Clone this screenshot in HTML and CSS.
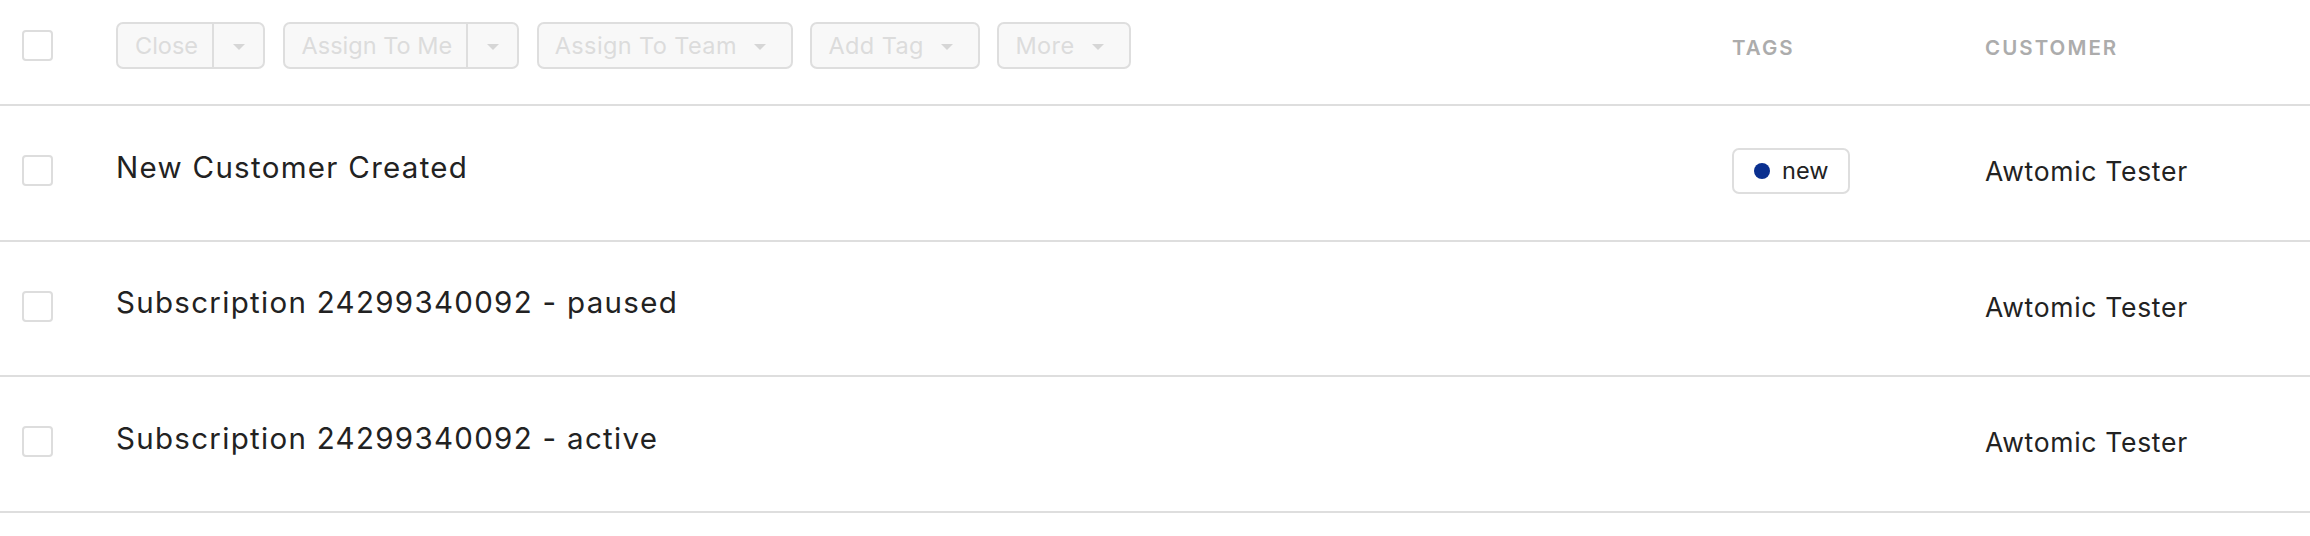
FILE: index.html
```html
<!DOCTYPE html>
<html lang="en">
<head>
    <meta charset="UTF-8">
    <meta name="viewport" content="width=device-width, initial-scale=1.0">
    <title>Conversations</title>
    <link rel="stylesheet" href="styles.css">
</head>
<body>

    <div class="list">

        <div class="list-row list-header">
            <div class="cell cell-check"><span class="checkbox"></span></div>
            <div class="cell cell-main">
                <div class="toolbar">
                    <div class="btn btn-split">
                        <span class="btn-label">Close</span>
                        <span class="btn-toggle"><span class="caret"></span></span>
                    </div>
                    <div class="btn btn-split">
                        <span class="btn-label">Assign To Me</span>
                        <span class="btn-toggle"><span class="caret"></span></span>
                    </div>
                    <div class="btn btn-menu">
                        <span class="btn-label">Assign To Team</span>
                        <span class="caret"></span>
                    </div>
                    <div class="btn btn-menu">
                        <span class="btn-label">Add Tag</span>
                        <span class="caret"></span>
                    </div>
                    <div class="btn btn-menu">
                        <span class="btn-label">More</span>
                        <span class="caret"></span>
                    </div>
                </div>
            </div>
            <div class="cell cell-tags col-title">Tags</div>
            <div class="cell cell-customer col-title">Customer</div>
        </div>

        <div class="list-row">
            <div class="cell cell-check"><span class="checkbox"></span></div>
            <div class="cell cell-main subject">New Customer Created</div>
            <div class="cell cell-tags">
                <span class="tag"><span class="tag-dot"></span>new</span>
            </div>
            <div class="cell cell-customer customer">Awtomic Tester</div>
        </div>

        <div class="list-row">
            <div class="cell cell-check"><span class="checkbox"></span></div>
            <div class="cell cell-main subject">Subscription 24299340092 - paused</div>
            <div class="cell cell-tags"></div>
            <div class="cell cell-customer customer">Awtomic Tester</div>
        </div>

        <div class="list-row">
            <div class="cell cell-check"><span class="checkbox"></span></div>
            <div class="cell cell-main subject">Subscription 24299340092 - active</div>
            <div class="cell cell-tags"></div>
            <div class="cell cell-customer customer">Awtomic Tester</div>
        </div>

    </div>

</body>
</html>
```

FILE: styles.css
```css
body {
    margin: 0;
    background-color: #ffffff;
    font-family: 'Inter', 'Noto Sans', sans-serif;
    color: #222222;
}

.list {
    width: 100%;
}

.list-row {
    display: grid;
    grid-template-columns: 116px 1fr 253px 325px;
    align-items: center;
    height: 135.5px;
    box-sizing: border-box;
    border-bottom: 2px solid #dedede;
}

.list-header {
    height: 106px;
}

.cell {
    display: flex;
    align-items: center;
}

.cell-check {
    padding-left: 22px;
}

.checkbox {
    display: block;
    width: 31px;
    height: 31px;
    box-sizing: border-box;
    border: 2px solid #dddddd;
    border-radius: 4px;
    background-color: #ffffff;
}

.list-row .cell-check {
    margin-top: -4px;
}

.list-header .cell-check {
    margin-top: -13px;
}

/* toolbar */

.toolbar {
    display: flex;
    gap: 17.5px;
    margin-top: -13px;
}

.btn {
    display: flex;
    align-items: center;
    height: 47px;
    box-sizing: border-box;
    border: 2px solid #dedede;
    border-radius: 7px;
    background-color: #f8f8f8;
    color: #dcdcdc;
    font-size: 23.5px;
    white-space: nowrap;
}

.btn-split .btn-label {
    padding: 0 14px 0 17px;
}

.btn-toggle {
    display: flex;
    align-items: center;
    justify-content: center;
    width: 49px;
    height: 100%;
    border-left: 2px solid #dedede;
}

.btn-menu {
    padding: 0 25px 0 16px;
    gap: 17px;
}

.btn-menu .btn-label {
    letter-spacing: 0.4px;
}

.caret {
    width: 0;
    height: 0;
    border-left: 6px solid transparent;
    border-right: 6px solid transparent;
    border-top: 6px solid #d6d6d6;
    margin-top: 2px;
}

.col-title {
    font-size: 20.5px;
    font-weight: 600;
    letter-spacing: 0.1em;
    text-transform: uppercase;
    color: #acacac;
    margin-top: -9px;
}

/* rows */

.subject {
    font-size: 29.5px;
    letter-spacing: 1.3px;
    margin-top: -12px;
}

.customer {
    font-size: 26.5px;
    letter-spacing: 0.7px;
    margin-top: -3px;
}

.tag {
    display: inline-flex;
    align-items: center;
    gap: 12px;
    height: 46px;
    box-sizing: border-box;
    padding: 0 20px 0 20px;
    border: 2px solid #dedede;
    border-radius: 7px;
    font-size: 23.5px;
    color: #222222;
    margin-top: -4px;
}

.tag-dot {
    width: 16px;
    height: 16px;
    border-radius: 50%;
    background-color: #0a2f8f;
}
```
